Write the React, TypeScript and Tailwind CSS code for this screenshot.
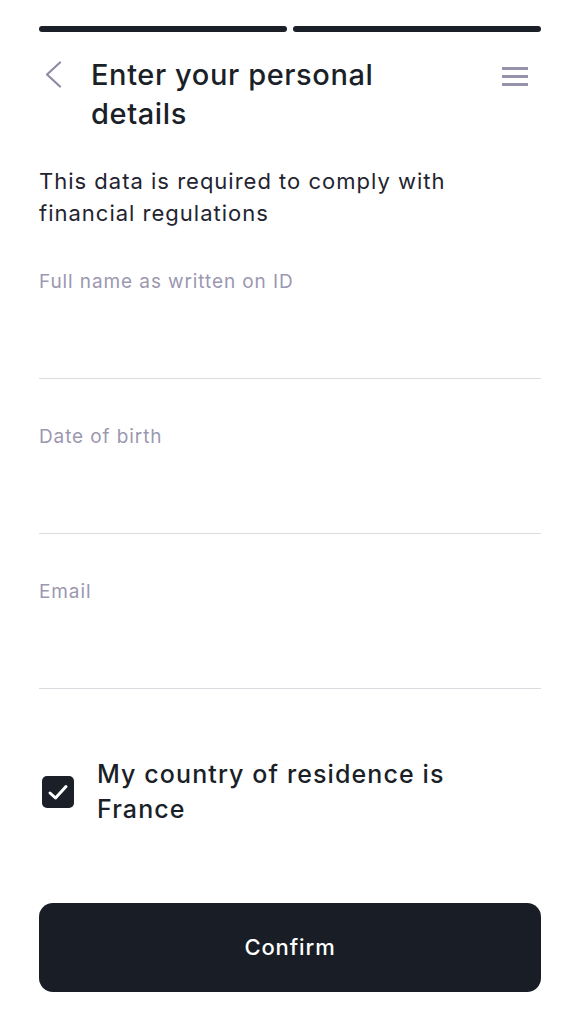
import { useState } from "react";

function Field({ label }: { label: string }) {
  return (
    <div className="flex flex-col border-b border-[#dcdbe2]">
      <label className="text-[19px] leading-[28px] tracking-[0.9px] text-[#9b98b0]">{label}</label>
      <input className="h-[82px] w-full bg-transparent text-[20px] text-[#1a1f28] outline-none" />
    </div>
  );
}

export default function App() {
  const [checked, setChecked] = useState(true);

  return (
    <div
      className="min-h-screen w-full bg-white px-[39px] text-[#1a1f28]"
      style={{ fontFamily: "Inter, 'Noto Sans', sans-serif" }}
    >
      {/* progress */}
      <div className="flex gap-[6px] pt-[26px]">
        <div className="h-[6px] flex-1 rounded-full bg-[#1a1f28]" />
        <div className="h-[6px] flex-1 rounded-full bg-[#1a1f28]" />
      </div>

      {/* header */}
      <div className="mt-[23px] flex items-start">
        <button className="ml-[5px] mt-[6px] h-[27px] w-[18px] shrink-0">
          <svg width="18" height="27" viewBox="0 0 18 27" fill="none">
            <path d="M16 1.5 L3 13.5 L16 25.5" stroke="#8f8ba7" strokeWidth="2.2" strokeLinecap="round" strokeLinejoin="round" />
          </svg>
        </button>
        <h1 className="ml-[29px] flex-1 text-[29px] font-medium leading-[39px] tracking-[0.6px]">
          Enter your personal
          <br />
          details
        </h1>
        <button className="mr-[13px] mt-[12px] flex w-[26px] flex-col gap-[5px]">
          <span className="h-[3px] w-full bg-[#9592ab]" />
          <span className="h-[3px] w-full bg-[#9592ab]" />
          <span className="h-[3px] w-full bg-[#9592ab]" />
        </button>
      </div>

      <p className="mt-[32px] text-[22px] leading-[32px] tracking-[1px] text-[#1f2430]">
        This data is required to comply with
        <br />
        financial regulations
      </p>

      <div className="mt-[39px] flex flex-col gap-[44px]">
        <Field label="Full name as written on ID" />
        <Field label="Date of birth" />
        <Field label="Email" />
      </div>

      <label className="mt-[68px] flex cursor-pointer items-center gap-[23px]">
        <span
          onClick={() => setChecked(!checked)}
          className="ml-[3px] flex h-[32px] w-[32px] shrink-0 items-center justify-center rounded-[5px] bg-[#1a1f28]"
        >
          {checked && (
            <svg width="32" height="32" viewBox="0 0 32 32" fill="none">
              <path d="M8 17 L13.5 22 L24 10.5" stroke="white" strokeWidth="3" strokeLinecap="round" strokeLinejoin="round" />
            </svg>
          )}
        </span>
        <span className="text-[25px] font-medium leading-[35px] tracking-[1.1px]">
          My country of residence is
          <br />
          France
        </span>
      </label>

      <button className="mt-[76px] h-[89px] w-full rounded-[14px] bg-[#181d26] text-[22px] font-medium tracking-[0.9px] text-white">
        Confirm
      </button>
    </div>
  );
}
